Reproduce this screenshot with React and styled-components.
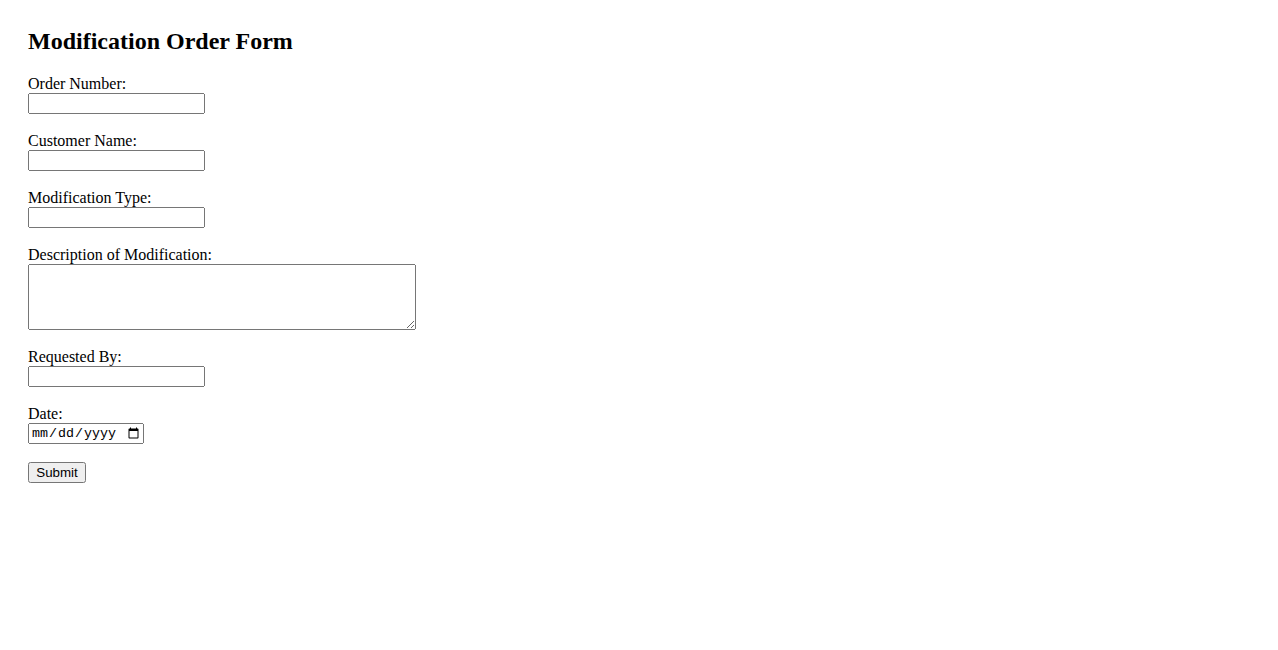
import React from 'react';
import styled, { createGlobalStyle } from 'styled-components';

const GlobalStyle = createGlobalStyle`
    body {
        margin: 8px;
        background: #fff;
        color: #000;
        font-family: "Liberation Serif", "Times New Roman", serif;
        font-size: 16px;
    }
`;

const Page = styled.div`
    padding: 20px;
`;

const Title = styled.h2`
    margin: 0 0 0.83em;
    font-size: 24px;
    font-weight: bold;
`;

const Form = styled.form`
    display: block;
`;

const Label = styled.label`
    font-family: "Liberation Serif", "Times New Roman", serif;
`;

const Field = styled.input`
    box-sizing: border-box;
    width: 177px;
    height: 21px;
    font-family: "Liberation Sans", Arial, sans-serif;
    font-size: 13.333px;
`;

const DateField = styled.input`
    box-sizing: border-box;
    width: 116px;
    height: 21px;
    font-family: "Liberation Mono", "DejaVu Sans Mono", monospace;
    font-size: 13.333px;
`;

const Area = styled.textarea`
    box-sizing: border-box;
    width: 388px;
    height: 66px;
    vertical-align: bottom;
    font-family: "Liberation Mono", monospace;
    font-size: 13.333px;
`;

const Button = styled.button`
    box-sizing: border-box;
    width: 58px;
    height: 21px;
    font-family: "Liberation Sans", Arial, sans-serif;
    font-size: 13.333px;
`;

const fields = [
    { id: 'orderNumber', label: 'Order Number:' },
    { id: 'customerName', label: 'Customer Name:' },
    { id: 'modificationType', label: 'Modification Type:' },
];

export default function App() {
    return (
        <Page>
            <GlobalStyle />
            <Title>Modification Order Form</Title>
            <Form onSubmit={e => e.preventDefault()}>
                {fields.map(f => (
                    <React.Fragment key={f.id}>
                        <Label htmlFor={f.id}>{f.label}</Label><br />
                        <Field type="text" id={f.id} name={f.id} /><br /><br />
                    </React.Fragment>
                ))}
                <Label htmlFor="description">Description of Modification:</Label><br />
                <Area id="description" name="description" rows="4" cols="50" /><br /><br />
                <Label htmlFor="requestedBy">Requested By:</Label><br />
                <Field type="text" id="requestedBy" name="requestedBy" /><br /><br />
                <Label htmlFor="date">Date:</Label><br />
                <DateField type="date" id="date" name="date" /><br /><br />
                <Button type="submit">Submit</Button>
            </Form>
        </Page>
    );
}
